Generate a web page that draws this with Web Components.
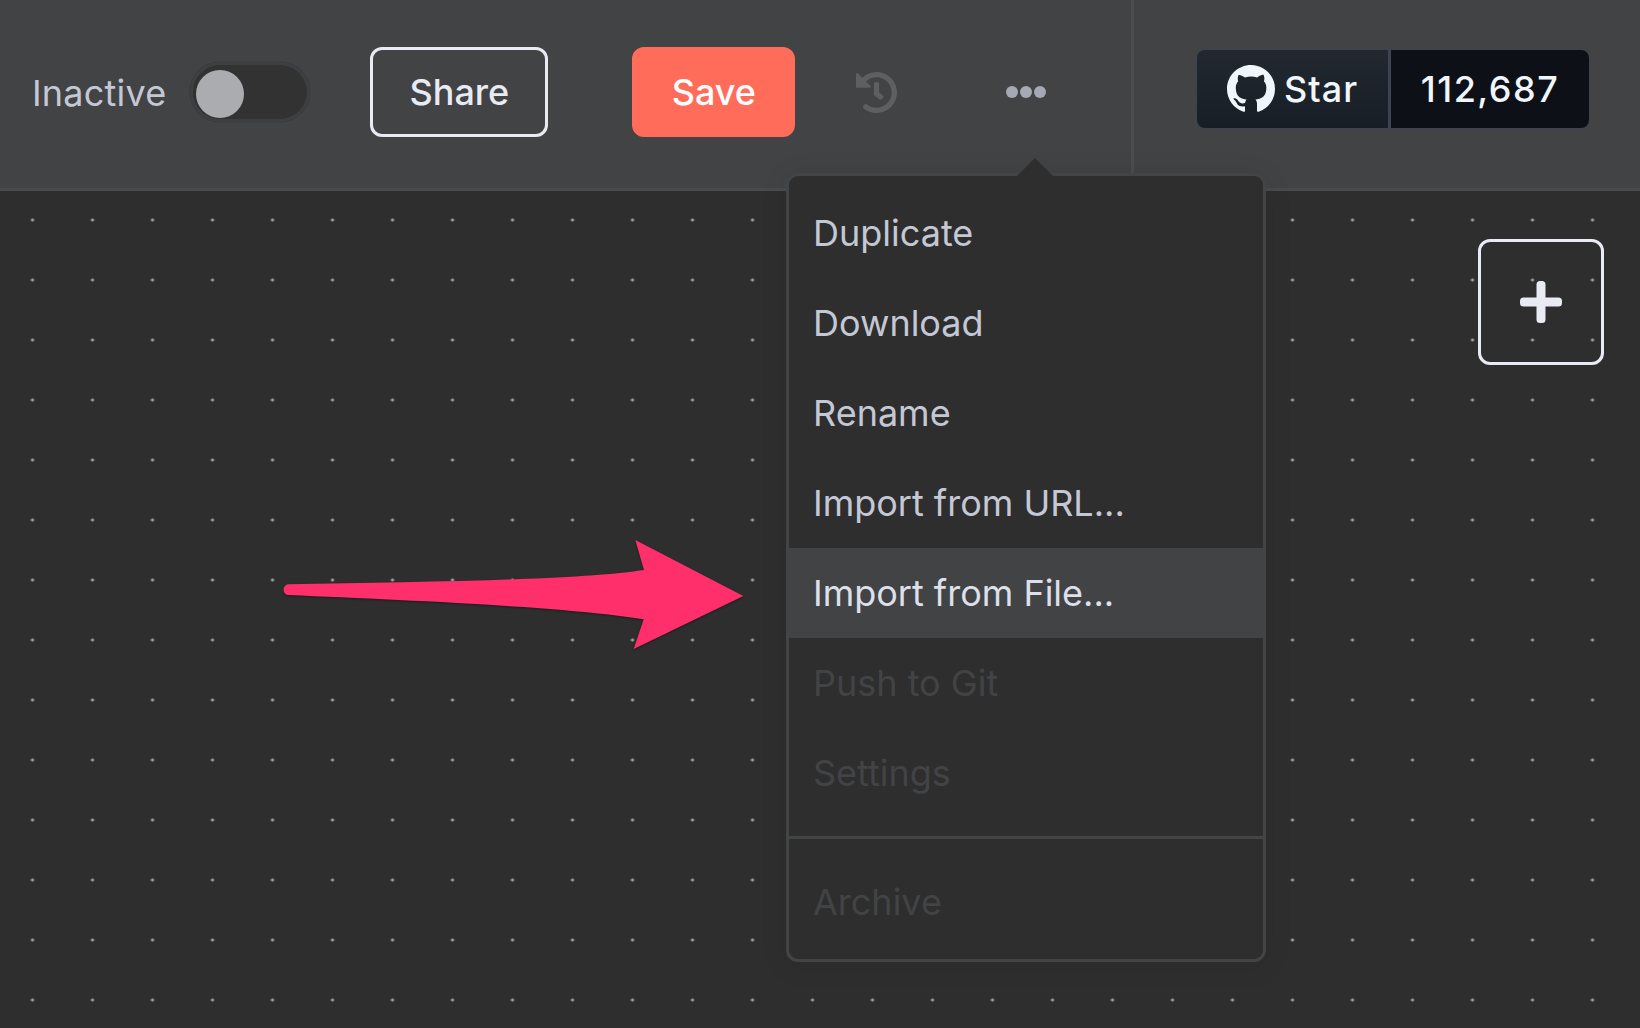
<!DOCTYPE html>
<html>
<head>
<meta charset="utf-8">
<style>
  html, body { margin: 0; height: 100%; background: #2e2e2e; overflow: hidden; }
  body { font-family: Inter, "Liberation Sans", sans-serif; display: flex; flex-direction: column; }
</style>
</head>
<body>
<editor-header>
  <status-toggle>Inactive</status-toggle>
  <header-button style="margin-left:60px">Share</header-button>
  <header-button kind="save" style="margin-left:84px">Save</header-button>
  <history-icon style="margin-left:61px"></history-icon>
  <more-dots style="margin-left:109px"></more-dots>
  <github-star slot="end" count="112,687"></github-star>
</editor-header>
<editor-canvas>
  <add-button></add-button>
  <workflow-menu>
    <menu-item>Duplicate</menu-item>
    <menu-item>Download</menu-item>
    <menu-item>Rename</menu-item>
    <menu-item>Import from URL...</menu-item>
    <menu-item active>Import from File...</menu-item>
    <menu-item disabled>Push to Git</menu-item>
    <menu-item disabled>Settings</menu-item>
    <menu-item disabled divided>Archive</menu-item>
  </workflow-menu>
  <pointer-arrow></pointer-arrow>
</editor-canvas>

<script>
// tiny helper, every component is just a shadow root + markup
const comp = (name, html, setup) => {
  customElements.define(name, class extends HTMLElement {
    constructor() {
      super();
      this.attachShadow({ mode: "open" }).innerHTML = html;
      if (setup) setup(this);
    }
  });
};

comp("editor-header", `
  <style>
    :host { display: flex; flex: none; height: 188px; border-bottom: 3px solid #4a4b4e; background: #424345; }
    .main { flex: none; width: 1099px; padding: 0 0 4px 32px; display: flex; align-items: center; border-right: 3px solid #4b4c4f; }
    .end { flex: 1; padding: 0 0 10px 62px; display: flex; align-items: center; }
  </style>
  <div class="main"><slot></slot></div>
  <div class="end"><slot name="end"></slot></div>
`);

comp("status-toggle", `
  <style>
    :host { display: flex; align-items: center; gap: 24px; color: #c4c8d4; font-size: 36px; letter-spacing: .2px; }
    span { padding-top: 2px; }
    .track { width: 120px; height: 60px; box-sizing: border-box; border: 3px solid #3e3f42; border-radius: 30px; background: #323232; padding: 5px 3px; box-shadow: 0 0 0 .5px #37383b; }
    .knob { width: 48px; height: 48px; border-radius: 50%; background: #abacaf; }
  </style>
  <span><slot></slot></span>
  <div class="track"><div class="knob"></div></div>
`);

comp("header-button", `
  <style>
    :host { display: block; }
    button {
      display: block; font: 500 36px Inter, "Liberation Sans", sans-serif; height: 90px; width: 178px; padding: 0;
      box-sizing: border-box; border-radius: 12px; background: transparent; border: 3px solid #e8eaf4; color: #e8eaf4;
    }
    :host([kind=save]) button { width: 163px; background: #ff6d5a; border-color: #ff6d5a; color: #fff; }
  </style>
  <button><slot></slot></button>
`);

comp("history-icon", `
  <style>:host { display: block; width: 41px; height: 41px; } svg { display: block; }</style>
  <svg viewBox="8 8 496 496" width="41" height="41" fill="#5e5f62"><path d="M504 255.531c.253 136.64-111.18 248.372-247.82 248.468-59.015.042-113.223-20.53-155.822-54.911-11.077-8.94-11.905-25.541-1.839-35.607l11.267-11.267c8.609-8.609 22.353-9.551 31.891-1.984C173.062 425.135 212.781 440 256 440c101.705 0 184-82.311 184-184 0-101.705-82.311-184-184-184-48.814 0-93.149 18.969-126.068 49.932l50.754 50.754c10.08 10.08 2.941 27.314-11.313 27.314H24c-8.837 0-16-7.163-16-16V38.627c0-14.254 17.234-21.393 27.314-11.314l49.372 49.372C129.209 34.136 189.552 8 256 8c136.81 0 247.747 110.78 248 247.531zm-180.912 78.784l9.823-12.63c8.138-10.463 6.253-25.542-4.21-33.679L288 256.349V152c0-13.255-10.745-24-24-24h-16c-13.255 0-24 10.745-24 24v135.651l65.409 50.874c10.463 8.137 25.541 6.253 33.679-4.21z"/></svg>
`);

comp("more-dots", `
  <style>
    :host { display: flex; gap: 2px; }
    i { display: block; width: 12px; height: 12px; border-radius: 50%; background: #a5a9b6; }
  </style>
  <i></i><i></i><i></i>
`);

comp("github-star", `
  <style>
    :host { display: flex; height: 80px; width: 394px; box-sizing: border-box; border: 1.5px solid #3d4350; border-radius: 9px; overflow: hidden; color: #f0f6fc; font: 500 36px Inter, "Liberation Sans", sans-serif; letter-spacing: 1.5px; }
    .star { flex: none; width: 194px; display: flex; align-items: center; gap: 9px; padding-left: 30px; box-sizing: border-box; background: linear-gradient(#212830, #181e26); border-right: 3px solid #3d4350; letter-spacing: 1px; }
    .count { flex: 1; display: flex; align-items: center; justify-content: center; background: #0d1117; }
    svg { display: block; flex: none; }
  </style>
  <div class="star">
    <svg viewBox="0 0 16 16" width="48" height="48" fill="#f0f6fc"><path d="M8 0C3.58 0 0 3.58 0 8c0 3.54 2.29 6.53 5.47 7.59.4.07.55-.17.55-.38 0-.19-.01-.82-.01-1.49-2.01.37-2.53-.49-2.69-.94-.09-.23-.48-.94-.82-1.13-.28-.15-.68-.52-.01-.53.63-.01 1.08.58 1.23.82.72 1.21 1.87.87 2.33.66.07-.52.28-.87.51-1.07-1.78-.2-3.64-.89-3.64-3.95 0-.87.31-1.59.82-2.15-.08-.2-.36-1.02.08-2.12 0 0 .67-.21 2.2.82.64-.18 1.32-.27 2-.27.68 0 1.36.09 2 .27 1.53-1.04 2.2-.82 2.2-.82.44 1.1.16 1.92.08 2.12.51.56.82 1.27.82 2.15 0 3.07-1.87 3.75-3.65 3.95.29.25.54.73.54 1.48 0 1.07-.01 1.93-.01 2.2 0 .21.15.46.55.38A8.013 8.013 0 0016 8c0-4.42-3.58-8-8-8z"/></svg>
    <span>Star</span>
  </div>
  <div class="count"></div>
`, el => { el.shadowRoot.querySelector(".count").textContent = el.getAttribute("count"); });

comp("editor-canvas", `
  <style>
    :host {
      display: block; flex: 1; position: relative; overflow: visible;
      background-color: #2e2e2e;
      background-image: radial-gradient(circle at center, #a0a0a0 0, #a0a0a0 1.2px, transparent 1.9px);
      background-size: 60px 60px;
      background-position: 2.5px -1px;
    }
  </style>
  <slot></slot>
`);

comp("add-button", `
  <style>
    :host { position: absolute; left: 1478px; top: 48px; width: 126px; height: 126px; box-sizing: border-box; border: 3px solid #e8eaf4; border-radius: 12px; display: flex; align-items: center; justify-content: center; }
    svg { display: block; }
  </style>
  <svg width="42" height="42" viewBox="0 0 42 42" fill="#e8eaf4"><rect x="16.5" y="0" width="9" height="42" rx="3.5"/><rect x="0" y="16.5" width="42" height="9" rx="3.5"/></svg>
`);

comp("workflow-menu", `
  <style>
    :host {
      position: absolute; left: 786px; top: -18px; width: 480px; box-sizing: border-box;
      background: #2e2e2e; border: 3px solid #434446; border-radius: 12px; padding: 12px 0 12px;
      box-shadow: 0 4px 30px rgba(0,0,0,.08);
    }
    .tip { position: absolute; left: 228px; top: -18px; width: 0; height: 0; border: 18px solid transparent; border-top: 0; border-bottom-color: #2e2e2e; }
  </style>
  <div class="tip"></div>
  <slot></slot>
`);

comp("menu-item", `
  <style>
    :host { display: flex; align-items: center; height: 90px; padding-left: 24px; font-size: 36px; color: #c4c8d4; }
    :host([active]) { background: #424345; color: #dde0ea; }
    :host([disabled]) { color: #424345; }
    :host([divided]) { margin-top: 39px; position: relative; }
    :host([divided])::before { content: ""; position: absolute; left: 0; right: 0; top: -21px; height: 3px; background: #434446; }
  </style>
  <slot></slot>
`);

comp("pointer-arrow", `
  <style>
    :host { position: absolute; left: 0; top: 0; pointer-events: none; }
    svg { display: block; overflow: visible; filter: drop-shadow(0 1px 1px rgba(0,0,0,.4)); }
  </style>
  <svg width="760" height="470" viewBox="0 191 760 470">
    <path fill="#ff2f6c" d="M289 584.3 C420 582 580 580 644 570 L635.3 540 L743.3 596 L633.7 649 L643.7 619.3 C560 606 400 600 289 595 C281.8 595 281.8 584.3 289 584.3 Z"/>
  </svg>
`);
</script>
</body>
</html>
